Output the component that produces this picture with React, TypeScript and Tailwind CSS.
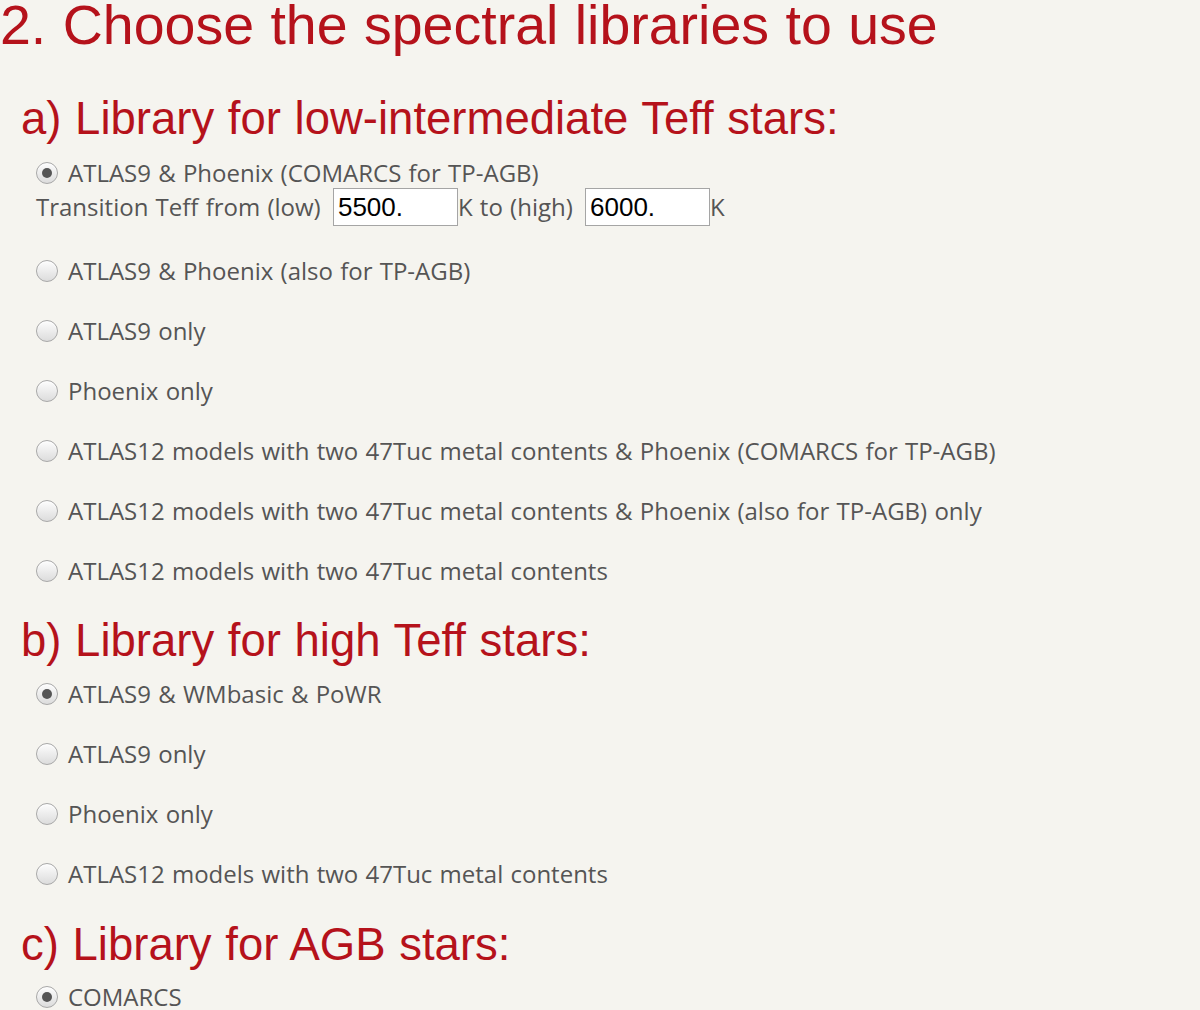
import React from "react";

const body = "font-['Open_Sans','DejaVu_Sans',sans-serif] text-[24px] [word-spacing:1px] text-[#555]";
const head = "font-['Liberation_Sans',Arial,sans-serif] text-[#b5121b]";

function Radio({ checked }: { checked?: boolean }) {
  return (
    <span className="flex h-[22px] w-[22px] shrink-0 items-center justify-center rounded-full border border-[#a8a8a8] bg-gradient-to-b from-[#fdfdfd] to-[#dcdcdc] shadow-[inset_0_1px_1px_rgba(255,255,255,0.8)]">
      {checked && <span className="h-[10px] w-[10px] rounded-full bg-[#555]" />}
    </span>
  );
}

function Option({ label, checked, tall = true }: { label: string; checked?: boolean; tall?: boolean }) {
  return (
    <div className={`flex items-center gap-[10px] pl-[36px] ${tall ? "h-[60px]" : "h-[34px]"}`}>
      <Radio checked={checked} />
      <span className="whitespace-nowrap">{label}</span>
    </div>
  );
}

function TeffInput({ value }: { value: string }) {
  return (
    <span className="ml-[5px] inline-flex h-[38px] w-[125px] items-center border border-[#a5a5a5] bg-white pl-[4px] font-['Liberation_Sans',Arial,sans-serif] text-[26px] text-black">
      {value}
    </span>
  );
}

function Heading({ children, className = "" }: { children: React.ReactNode; className?: string }) {
  return (
    <h2 className={`${head} h-[46px] whitespace-nowrap pl-[21px] text-[45.5px] leading-[46px] ${className}`}>{children}</h2>
  );
}

export default function App() {
  return (
    <main className={`min-h-[1010px] overflow-hidden bg-[#f5f4ef] ${body}`}>
      <h1 className={`${head} -mt-[2px] h-[55px] whitespace-nowrap text-[55.5px] leading-[55px]`}>
        2. Choose the spectral libraries to use
      </h1>

      <Heading className="mt-[43px]">a) Library for low-intermediate Teff stars:</Heading>
      <div className="mt-[14px]">
        <Option tall={false} checked label="ATLAS9 & Phoenix (COMARCS for TP-AGB)" />
        <div className="flex h-[34px] items-center whitespace-nowrap pl-[36px]">
          <span>Transition Teff from (low)&nbsp;</span>
          <TeffInput value="5500." />
          <span>K to (high)&nbsp;</span>
          <TeffInput value="6000." />
          <span>K</span>
        </div>
      </div>
      <div className="mt-[17px]">
        <Option label="ATLAS9 & Phoenix (also for TP-AGB)" />
        <Option label="ATLAS9 only" />
        <Option label="Phoenix only" />
        <Option label="ATLAS12 models with two 47Tuc metal contents & Phoenix (COMARCS for TP-AGB)" />
        <Option label="ATLAS12 models with two 47Tuc metal contents & Phoenix (also for TP-AGB) only" />
        <Option label="ATLAS12 models with two 47Tuc metal contents" />
      </div>

      <Heading className="mt-[17px]">b) Library for high Teff stars:</Heading>
      <div>
        <Option checked label="ATLAS9 & WMbasic & PoWR" />
        <Option label="ATLAS9 only" />
        <Option label="Phoenix only" />
        <Option label="ATLAS12 models with two 47Tuc metal contents" />
      </div>

      <Heading className="mt-[18px]">c) Library for AGB stars:</Heading>
      <div className="-mt-[1px]">
        <Option checked label="COMARCS" />
      </div>
    </main>
  );
}
